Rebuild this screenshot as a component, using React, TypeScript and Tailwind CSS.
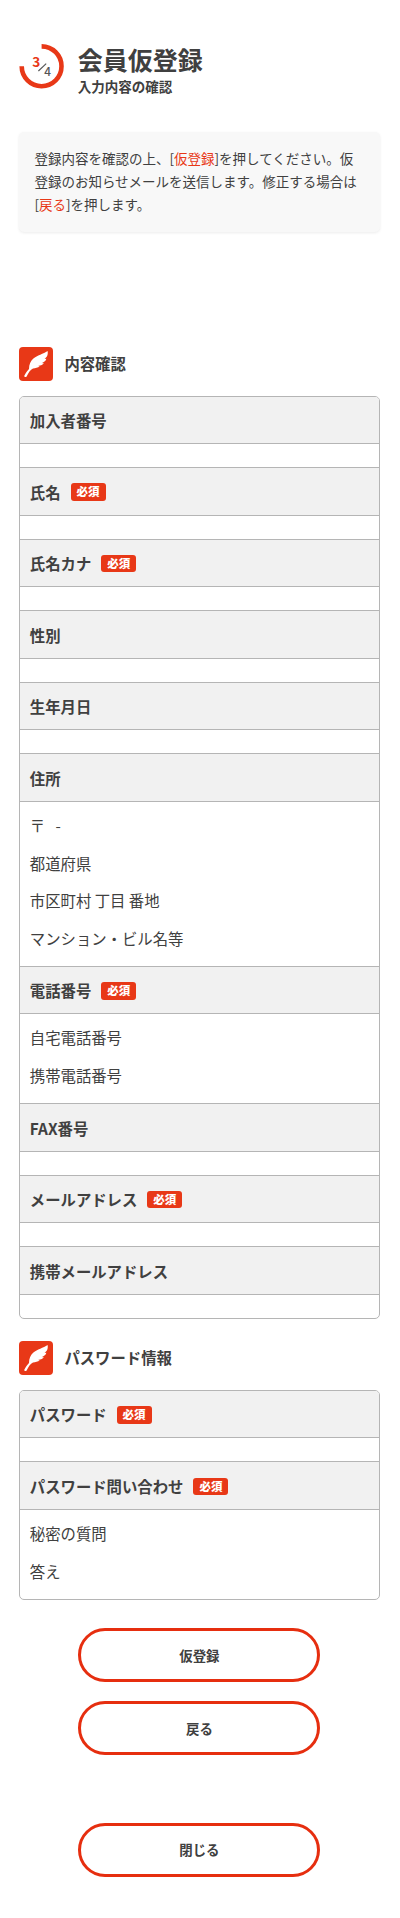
type Row = {
  label: string;
  required?: boolean;
  lines?: string[];
};

const memberRows: Row[] = [
  { label: "加入者番号" },
  { label: "氏名", required: true },
  { label: "氏名カナ", required: true },
  { label: "性別" },
  { label: "生年月日" },
  {
    label: "住所",
    lines: ["〒   -", "都道府県", "市区町村 丁目 番地", "マンション・ビル名等"],
  },
  { label: "電話番号", required: true, lines: ["自宅電話番号", "携帯電話番号"] },
  { label: "FAX番号" },
  { label: "メールアドレス", required: true },
  { label: "携帯メールアドレス" },
];

const passwordRows: Row[] = [
  { label: "パスワード", required: true },
  { label: "パスワード問い合わせ", required: true, lines: ["秘密の質問", "答え"] },
];

function StepIcon() {
  return (
    <svg className="h-[46px] w-[46px] shrink-0" viewBox="0 0 46 46">
      <path
        d="M22.6 3.4 A19.9 19.9 0 1 1 2.7 23.3"
        fill="none"
        stroke="#e83817"
        strokeWidth="4.6"
      />
      <text x="13.2" y="24.2" fontSize="13.6" fontWeight="700" fill="#e83817">
        3
      </text>
      <path d="M19.4 28 L27.2 20.6" stroke="#555" strokeWidth="1.1" />
      <text x="25.3" y="33.2" fontSize="11.8" fontWeight="500" fill="#555">
        4
      </text>
    </svg>
  );
}

function SectionTitle({ children }: { children: string }) {
  return (
    <h2 className="flex h-[34px] items-center gap-[11.6px] text-[15.36px] font-bold">
      <svg className="h-[34px] w-[34px] shrink-0" viewBox="0 0 34 34">
        <rect width="34" height="34" rx="4" fill="#e83817" />
        <path
          d="M5.3 28.8 C6.8 25.8 8.2 23.9 10 22 C10 17.6 11.6 14.2 14.4 11.6 C18 8 24.4 7 28.6 3.9 C29 6 28.8 7.9 27.7 9.8 L25.6 12 L27.3 11.7 C27 13.4 26 14.4 24.4 15.2 L22.6 16.2 L24.8 16 C24 17.6 22.6 18.2 21 18.6 L19 19 L20.8 19.6 C18.8 21 16.4 21.2 14 21.5 C11.4 22.6 9.4 26 7.6 29.6 C6.8 30.6 5 30 5.3 28.8 Z"
          fill="#fff"
        />
      </svg>
      {children}
    </h2>
  );
}

function ConfirmTable({ rows }: { rows: Row[] }) {
  return (
    <dl className="overflow-hidden rounded-[5px] border border-[#b5b5b5] text-[15.36px]">
      {rows.map((row) => (
        <div key={row.label} className="border-b border-[#b5b5b5] last:border-b-0">
          <dt className="flex h-[47.4px] items-center border-b border-[#b5b5b5] bg-[#f1f1f1] pt-[1.4px] pl-[10px] font-bold">
            {row.label}
            {row.required && (
              <span className="ml-[10px] flex h-[17.5px] w-[35px] items-center justify-center rounded-[3px] bg-[#e83817] text-[11.5px] font-black text-white">
                必須
              </span>
            )}
          </dt>
          {row.lines ? (
            <dd className="pt-[5px] pb-[8.4px] pl-[10px]">
              {row.lines.map((line) => (
                <p key={line} className="h-[37.7px] leading-[37.7px] whitespace-pre">
                  {line}
                </p>
              ))}
            </dd>
          ) : (
            <dd className="h-[23.2px]" />
          )}
        </div>
      ))}
    </dl>
  );
}

function PillButton({ children }: { children: string }) {
  return (
    <button className="h-[54px] w-[242px] rounded-full border-3 border-[#e62e0f] pb-[1px] text-[13.44px] font-bold">
      {children}
    </button>
  );
}

export default function App() {
  return (
    <main className="h-[1918px] w-[400px] bg-white pt-[43px] pr-[20px] pl-[18.8px] font-['Noto_Sans_CJK_JP',sans-serif] text-[#404040]">
      <header className="flex h-[54px] gap-[13px]">
        <StepIcon />
        <div>
          <h1 className="h-[34px] text-[25px] leading-[33px] font-bold">会員仮登録</h1>
          <p className="text-[13.5px] leading-[19px] font-bold">入力内容の確認</p>
        </div>
      </header>

      <p className="mt-[35.4px] h-[99.6px] rounded-[5px] bg-[#f8f8f8] pt-[14.6px] pr-[18px] pl-[15.6px] text-[13.5px] leading-[23.2px] shadow-[0_1px_3px_rgba(0,0,0,0.08)]">
        登録内容を確認の上、[<span className="text-[#e83817]">仮登録</span>
        ]を押してください。仮登録のお知らせメールを送信します。修正する場合は[
        <span className="text-[#e83817]">戻る</span>]を押します。
      </p>

      <section className="mt-[114.6px]">
        <SectionTitle>内容確認</SectionTitle>
        <div className="mt-[15px]">
          <ConfirmTable rows={memberRows} />
        </div>
      </section>

      <section className="mt-[22px]">
        <SectionTitle>パスワード情報</SectionTitle>
        <div className="mt-[15px]">
          <ConfirmTable rows={passwordRows} />
        </div>
      </section>

      <div className="mt-[28.8px] flex flex-col items-center">
        <PillButton>仮登録</PillButton>
        <div className="mt-[19px]">
          <PillButton>戻る</PillButton>
        </div>
        <div className="mt-[67.4px]">
          <PillButton>閉じる</PillButton>
        </div>
      </div>
    </main>
  );
}
